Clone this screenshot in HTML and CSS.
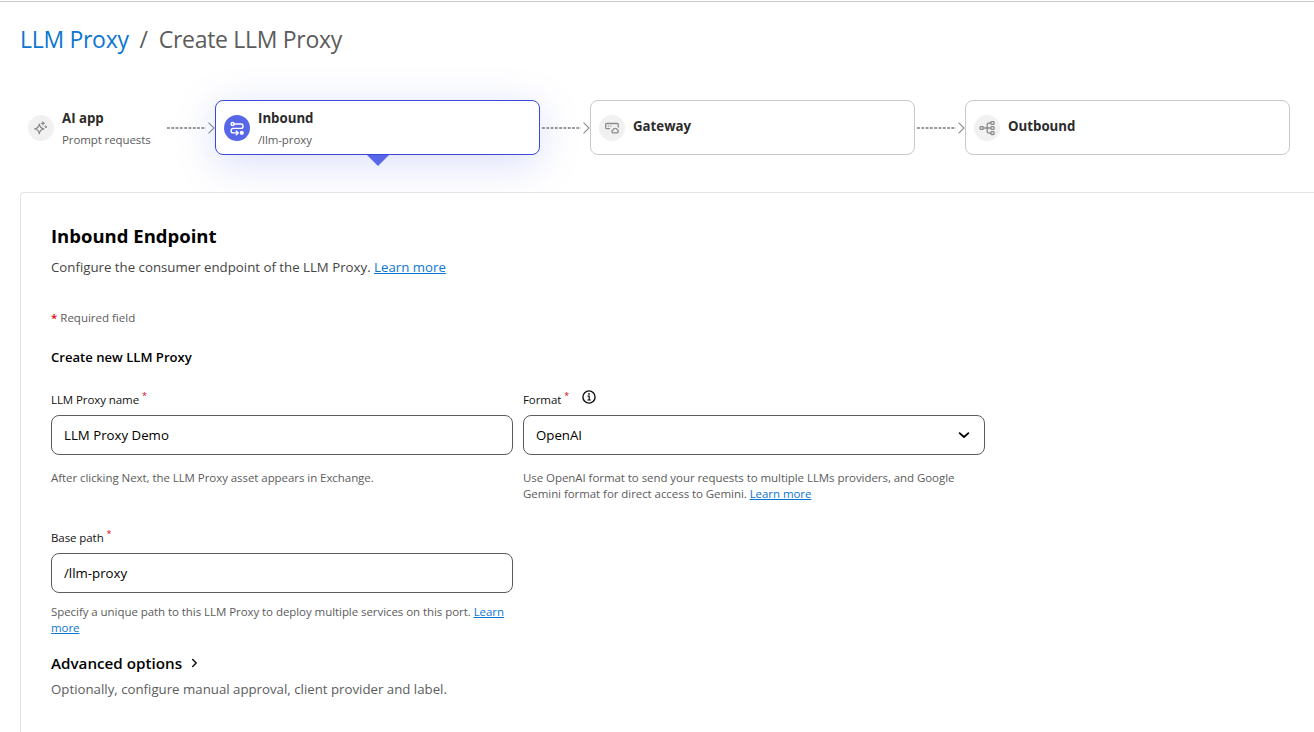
FILE: index.html
```html
<!DOCTYPE html>
<html lang="en">
<head>
<meta charset="utf-8">
<title>Create LLM Proxy</title>
<link rel="stylesheet" href="styles.css">
</head>
<body>
<nav class="breadcrumb">
  <a class="crumb-link" href="#">LLM Proxy</a><span class="crumb-sep">/</span><span class="crumb-current">Create LLM Proxy</span>
</nav>

<section class="steps">
  <div class="step step-plain">
    <span class="step-icon">
      <svg width="26" height="26" viewBox="0 0 26 26" fill="none" stroke="#8c8c8c" stroke-width="1.3" stroke-linejoin="round" stroke-linecap="round"><path d="M11.300 9.200Q11.900 13.200 15.900 13.900Q11.900 14.600 11.300 18.700Q10.700 14.600 6.700 13.900Q10.700 13.200 11.300 9.200Z"/><path d="M14.900 6.800V9.800M13.400 8.300H16.400"/><path d="M17.900 10.900L18.900 11.900L17.900 12.900L16.900 11.900Z" fill="#8c8c8c" stroke-width=".8"/></svg>
    </span>
    <div class="step-text"><span class="step-title">AI app</span><span class="step-sub">Prompt requests</span></div>
  </div>
  <svg class="connector" width="50" height="14" viewBox="0 0 50 14" fill="none" stroke="#8c8c8c"><path d="M2 7H41" stroke="#999" stroke-width="2" stroke-dasharray="2.800 1.500"/><path d="M43.500 1.700L49 7L43.500 12.300" stroke-width="1.100"/></svg>
  <div class="step step-card step-active">
    <span class="step-icon">
      <svg width="26" height="26" viewBox="0 0 26 26" fill="none" stroke="#fff" stroke-width="1.400" stroke-linecap="round" stroke-linejoin="round"><circle cx="8.600" cy="9" r="1.500"/><path d="M10.100 9H16.900A2.200 2.200 0 0 1 16.900 13.400H9.300A2.200 2.200 0 0 0 9.300 17.900H13.200M12.300 16L14.200 17.900L12.300 19.800"/><circle cx="17.800" cy="17.800" r="1.400" fill="#fff"/></svg>
    </span>
    <div class="step-text"><span class="step-title">Inbound</span><span class="step-sub">/llm-proxy</span></div>
    <span class="step-pointer"></span>
  </div>
  <svg class="connector" width="50" height="14" viewBox="0 0 50 14" fill="none" stroke="#8c8c8c"><path d="M2 7H41" stroke="#999" stroke-width="2" stroke-dasharray="2.800 1.500"/><path d="M43.500 1.700L49 7L43.500 12.300" stroke-width="1.100"/></svg>
  <div class="step step-card step-single">
    <span class="step-icon">
      <svg width="26" height="26" viewBox="0 0 26 26" fill="none" stroke="#8c8c8c" stroke-width="1.300" stroke-linejoin="round" stroke-linecap="round"><path d="M10.500 13.700H7.700A1 1 0 0 1 6.700 12.700V9.500A1 1 0 0 1 7.700 8.500H18.300A1 1 0 0 1 19.300 9.500V12"/><path d="M9.300 11.100H9.400M11.700 11.100H11.800"/><path d="M13.700 17.800H18.300A1.600 1.600 0 0 0 18.400 14.900A2.300 2.300 0 0 0 14 15.100A1.400 1.400 0 0 0 13.700 17.800Z"/></svg>
    </span>
    <div class="step-text"><span class="step-title">Gateway</span></div>
  </div>
  <svg class="connector" width="50" height="14" viewBox="0 0 50 14" fill="none" stroke="#8c8c8c"><path d="M2 7H41" stroke="#999" stroke-width="2" stroke-dasharray="2.800 1.500"/><path d="M43.500 1.700L49 7L43.500 12.300" stroke-width="1.100"/></svg>
  <div class="step step-card step-single">
    <span class="step-icon">
      <svg width="26" height="26" viewBox="0 0 26 26" fill="none" stroke="#8c8c8c" stroke-width="1.300"><rect x="6.200" y="11.600" width="3" height="2.800" rx=".5"/><rect x="17" y="6.600" width="3" height="2.800" rx=".5"/><rect x="17" y="11.600" width="3" height="2.800" rx=".5"/><rect x="17" y="16.700" width="3" height="2.800" rx=".5"/><path d="M9.200 13H17M17 8H15.300Q13.200 8 13.200 10V16Q13.200 18.100 15.300 18.100H17"/></svg>
    </span>
    <div class="step-text"><span class="step-title">Outbound</span></div>
  </div>
</section>

<main class="panel">
  <h1 class="panel-title">Inbound Endpoint</h1>
  <p class="panel-desc">Configure the consumer endpoint of the LLM Proxy. <a href="#">Learn more</a></p>
  <p class="required-note"><span class="required-star">*</span> Required field</p>
  <h2 class="section-title">Create new LLM Proxy</h2>

  <div class="form-grid">
    <div class="field">
      <label class="label">LLM Proxy name<span class="star">*</span></label>
      <div class="control">LLM Proxy Demo</div>
      <p class="help help-wide">After clicking Next, the LLM Proxy asset appears in Exchange.</p>
    </div>
    <div class="field">
      <label class="label">Format<span class="star">*</span>
        <svg class="info" width="14" height="14" viewBox="0 0 14 14" fill="none" stroke="#111" stroke-width="1.400"><circle cx="7" cy="7" r="6.100"/><path d="M5.500 6.200H7.200V10M5.300 10H8.900" stroke-width="1.200"/><circle cx="7" cy="3.900" r=".9" fill="#111" stroke="none"/></svg>
      </label>
      <div class="control">OpenAI
        <svg width="12" height="8" viewBox="0 0 12 8" fill="none" stroke="#000" stroke-width="1.800" stroke-linecap="round" stroke-linejoin="round"><path d="M1.600 2.100L6 6L10.400 2.100"/></svg>
      </div>
      <p class="help help-wide">Use OpenAI format to send your requests to multiple LLMs providers, and Google<br>Gemini format for direct access to Gemini. <a href="#">Learn more</a></p>
    </div>
    <div class="field">
      <label class="label">Base path<span class="star">*</span></label>
      <div class="control">/llm-proxy</div>
      <p class="help">Specify a unique path to this LLM Proxy to deploy multiple services on this port. <a href="#">Learn<br>more</a></p>
    </div>
  </div>

  <h2 class="advanced"><span>Advanced options</span>
    <svg width="7" height="10" viewBox="0 0 7 10" fill="none" stroke="#111" stroke-width="1.500" stroke-linecap="round" stroke-linejoin="round"><path d="M1.700 1.500L5.200 5L1.700 8.500"/></svg>
  </h2>
  <p class="advanced-desc">Optionally, configure manual approval, client provider and label.</p>
</main>
</body>
</html>
```
FILE: styles.css
```css
* { box-sizing: border-box; }
body {
  display: flex;
  flex-direction: column;
  margin: 0;
  height: 732px;
  background: linear-gradient(#c9c9c9, #c9c9c9) 0 1px / 100% 1px no-repeat #fff;
  font-family: "Open Sans", "Noto Sans", sans-serif;
  white-space: nowrap;
}
h1, h2, p { margin: 0; }
a { color: #0b76d1; }

.breadcrumb {
  display: flex;
  flex: none;
  height: 78px;
  padding: 22px 0 0 20px;
  font-size: 23px;
  line-height: 34px;
  letter-spacing: -0.3px;
  color: #5c5c5c;
}
.crumb-link { text-decoration: none; }
.crumb-sep { margin: 0 11px; }

.steps {
  display: flex;
  flex: none;
  align-items: center;
  height: 55px;
  margin: 22px 0 37px 20px;
}
.step { display: flex; align-items: center; height: 55px; }
.step-plain { width: 145px; padding-left: 8px; }
.connector { flex: none; }
.step-card {
  position: relative;
  width: 325px;
  padding-left: 8px;
  border: 1px solid #c9c9c9;
  border-radius: 8px;
  background: #fff;
}
.step-active {
  border-color: #3a49da;
  box-shadow: 0 8px 40px rgba(88, 103, 232, .22);
}
.step-icon {
  display: flex;
  width: 26px;
  height: 26px;
  margin-right: 8px;
  border-radius: 50%;
  background: #f1f1f1;
}
.step-active .step-icon { background: #5867e8; }
.step-text { display: flex; flex-direction: column; padding-top: 2px; }
.step-single .step-text { padding: 0 0 4px; }
.step-title { font-size: 13.25px; line-height: 18px; font-weight: 700; color: #2b2b2b; }
.step-sub { margin-top: 4px; font-size: 11.5px; line-height: 18px; letter-spacing: -0.1px; color: #5c5c5c; }
.step-pointer {
  position: absolute;
  top: 54px;
  left: 151px;
  border: 11px solid transparent;
  border-top-color: #5867e8;
  border-bottom: 0;
}

.panel {
  position: relative;
  flex: 1;
  min-height: 0;
  margin-left: 20px;
  padding: 29px 0 0 30px;
  border: solid #e3e3e3;
  border-width: 1px 0 0 1px;
  border-radius: 4px 0 0 0;
  background: #fff;
}
.panel-title { font-size: 18.5px; line-height: 28px; font-weight: 700; color: #000; }
.panel-desc { margin-top: 7px; font-size: 13.25px; line-height: 20px; color: #444; }
.required-note { margin-top: 32px; font-size: 11.5px; line-height: 18px; color: #5c5c5c; }
.required-star { color: #e3000b; font-weight: 600; }
.section-title { margin-top: 20px; font-size: 13.1px; line-height: 20px; font-weight: 600; color: #000; }

.form-grid {
  display: grid;
  grid-template-columns: 462px 462px;
  column-gap: 10px;
  margin-top: 24px;
}
.label {
  display: flex;
  height: 24px;
  font-size: 11.5px;
  line-height: 18px;
  letter-spacing: -0.08px;
  color: #111;
}
.star { margin-left: 3px; margin-top: -2px; font-size: 9px; line-height: 14px; color: #e3000b; }
.info { margin: -1px 0 0 13px; }
.control {
  display: flex;
  align-items: center;
  justify-content: space-between;
  height: 40px;
  padding: 0 14px 0 12px;
  border: 1px solid #5c5c5c;
  border-radius: 8px;
  font-size: 13.25px;
  color: #000;
}
.help { margin-top: 11px; font-size: 11.5px; line-height: 16px; letter-spacing: -0.06px; color: #5c5c5c; }
.help-wide { height: 59px; margin-top: 15px; }

.advanced {
  display: flex;
  align-items: center;
  gap: 9px;
  margin-top: 16px;
  font-size: 15.2px;
  line-height: 22px;
  font-weight: 600;
  color: #000;
}
.advanced-desc { margin-top: 5px; font-size: 13.25px; line-height: 20px; color: #5c5c5c; }
```
